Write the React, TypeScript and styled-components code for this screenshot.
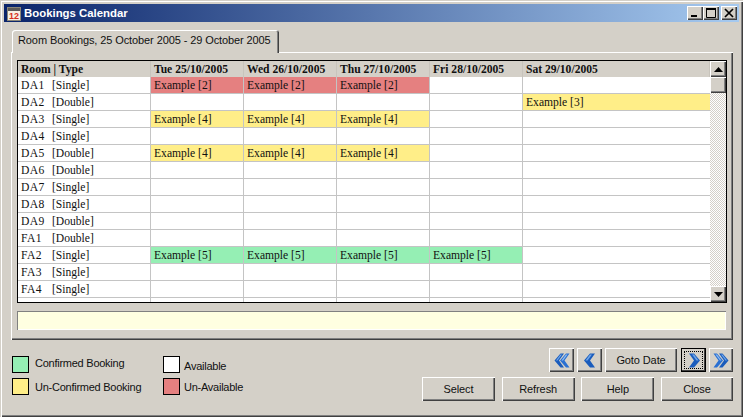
import styled, { createGlobalStyle } from 'styled-components';

const GlobalStyle = createGlobalStyle`
  html, body {
    margin: 0;
    padding: 0;
    background: #d4d0c8;
  }
  * {
    box-sizing: border-box;
  }
`;

type Booking = 'red' | 'yellow' | 'green';

interface RoomRow {
  room: string;
  type: string;
  cells: ([string, Booking] | null)[];
}

const colors: Record<Booking, string> = {
  red: '#e58080',
  yellow: '#ffee88',
  green: '#95efb4',
};

const red = (): [string, Booking] => ['Example [2]', 'red'];
const yellow = (): [string, Booking] => ['Example [4]', 'yellow'];
const green = (): [string, Booking] => ['Example [5]', 'green'];

const headers = [
  'Room | Type',
  'Tue 25/10/2005',
  'Wed 26/10/2005',
  'Thu 27/10/2005',
  'Fri 28/10/2005',
  'Sat 29/10/2005',
];

const rows: RoomRow[] = [
  { room: 'DA1', type: '[Single]', cells: [red(), red(), red(), null, null] },
  { room: 'DA2', type: '[Double]', cells: [null, null, null, null, ['Example [3]', 'yellow']] },
  { room: 'DA3', type: '[Single]', cells: [yellow(), yellow(), yellow(), null, null] },
  { room: 'DA4', type: '[Single]', cells: [null, null, null, null, null] },
  { room: 'DA5', type: '[Double]', cells: [yellow(), yellow(), yellow(), null, null] },
  { room: 'DA6', type: '[Double]', cells: [null, null, null, null, null] },
  { room: 'DA7', type: '[Single]', cells: [null, null, null, null, null] },
  { room: 'DA8', type: '[Single]', cells: [null, null, null, null, null] },
  { room: 'DA9', type: '[Double]', cells: [null, null, null, null, null] },
  { room: 'FA1', type: '[Double]', cells: [null, null, null, null, null] },
  { room: 'FA2', type: '[Single]', cells: [green(), green(), green(), green(), null] },
  { room: 'FA3', type: '[Single]', cells: [null, null, null, null, null] },
  { room: 'FA4', type: '[Single]', cells: [null, null, null, null, null] },
  { room: '', type: '', cells: [null, null, null, null, null] },
];

const LeftChevron = ({ double }: { double?: boolean }) => (
  <svg width="16" height="15" viewBox="0 0 16 15">
    {double ? (
      <>
        <path d="M6.5 0.5 L0.5 7.5 L6.5 14.5 H10 L5 7.5 L10 0.5 Z" fill="#1a5cbc" />
        <path d="M12 0.5 L6 7.5 L12 14.5 H15.5 L10.5 7.5 L15.5 0.5 Z" fill="#2a70d2" />
        <path d="M6.5 1.5 L2 7.5 H3.5 L8 1.5 Z" fill="#6fa6ea" />
        <path d="M12 1.5 L7.5 7.5 H9 L13.5 1.5 Z" fill="#8fbcf2" />
      </>
    ) : (
      <>
        <path d="M8 0.5 L2 7.5 L8 14.5 H13 L8 7.5 L13 0.5 Z" fill="#1a5cbc" />
        <path d="M8 1.5 L3.5 7.5 H5.5 L10 1.5 Z" fill="#6fa6ea" />
      </>
    )}
  </svg>
);

const RightChevron = ({ double }: { double?: boolean }) => (
  <Flipped>
    <LeftChevron double={double} />
  </Flipped>
);

const CalendarIcon = () => (
  <svg width="14" height="15" viewBox="0 0 14 15">
    <rect x="0.5" y="1.5" width="13" height="13" fill="#f6f1e4" stroke="#8a8678" />
    <rect x="1" y="2" width="12" height="3" fill="#5c5a58" />
    <text
      x="7"
      y="13"
      textAnchor="middle"
      fontFamily="Liberation Sans, sans-serif"
      fontWeight="bold"
      fontSize="9"
      fill="#d83020"
    >
      12
    </text>
  </svg>
);

export default function App() {
  return (
    <>
      <GlobalStyle />
      <Window>
        <TitleBar>
          <CalendarIcon />
          <Title>Bookings Calendar</Title>
          <WindowButtons>
            <CaptionButton aria-label="Minimize">
              <svg width="10" height="10" viewBox="0 0 10 10">
                <rect x="1" y="7" width="6" height="2" fill="#000" />
              </svg>
            </CaptionButton>
            <CaptionButton aria-label="Maximize">
              <svg width="11" height="10" viewBox="0 0 11 10">
                <path d="M0.5 1.5 H9.5 V9.5 H0.5 Z" fill="none" stroke="#000" />
                <rect x="0" y="0" width="10" height="2" fill="#000" />
              </svg>
            </CaptionButton>
            <CloseButton aria-label="Close">
              <svg width="10" height="10" viewBox="0 0 10 10">
                <path d="M1 1 L9 9 M9 1 L1 9" stroke="#000" strokeWidth="1.7" />
              </svg>
            </CloseButton>
          </WindowButtons>
        </TitleBar>
        <Content>
          <Tab>Room Bookings, 25 October 2005 - 29 October 2005</Tab>
          <Panel>
            <TableFrame>
              <Grid>
                <HeaderRow>
                  {headers.map((h) => (
                    <HeaderCell key={h}>{h}</HeaderCell>
                  ))}
                </HeaderRow>
                {rows.map((row, i) => (
                  <Row key={i}>
                    <Cell>
                      <RoomName>{row.room}</RoomName>
                      {row.type}
                    </Cell>
                    {row.cells.map((cell, j) => (
                      <Cell key={j} $fill={cell ? colors[cell[1]] : undefined}>
                        {cell ? cell[0] : ''}
                      </Cell>
                    ))}
                  </Row>
                ))}
              </Grid>
              <ScrollBar>
                <ScrollButton aria-label="Scroll up">
                  <svg width="9" height="5" viewBox="0 0 9 5">
                    <path d="M4.5 0 L9 5 H0 Z" fill="#000" />
                  </svg>
                </ScrollButton>
                <ScrollThumb />
                <ScrollTrack />
                <ScrollButton aria-label="Scroll down">
                  <svg width="9" height="5" viewBox="0 0 9 5">
                    <path d="M4.5 5 L9 0 H0 Z" fill="#000" />
                  </svg>
                </ScrollButton>
              </ScrollBar>
            </TableFrame>
            <StatusField />
          </Panel>
          <Footer>
            <Legend>
              <LegendColumn $width={151}>
                <LegendItem $gap={6}>
                  <Swatch $color={colors.green} />
                  <LegendLabel $drop={-2}>Confirmed Booking</LegendLabel>
                </LegendItem>
                <LegendItem $gap={6}>
                  <Swatch $color={colors.yellow} />
                  <LegendLabel>Un-Confirmed Booking</LegendLabel>
                </LegendItem>
              </LegendColumn>
              <LegendColumn>
                <LegendItem $gap={4}>
                  <Swatch $color="#ffffff" />
                  <LegendLabel $drop={1}>Available</LegendLabel>
                </LegendItem>
                <LegendItem $gap={4}>
                  <Swatch $color={colors.red} />
                  <LegendLabel>Un-Available</LegendLabel>
                </LegendItem>
              </LegendColumn>
            </Legend>
            <Actions>
              <NavRow>
                <Button $width={25} aria-label="Previous week">
                  <LeftChevron double />
                </Button>
                <Button $width={25} aria-label="Previous day">
                  <LeftChevron />
                </Button>
                <Button $width={72}>Goto Date</Button>
                <FocusedButton aria-label="Next day">
                  <FocusRing>
                    <RightChevron />
                  </FocusRing>
                </FocusedButton>
                <Button $width={24} aria-label="Next week">
                  <RightChevron double />
                </Button>
              </NavRow>
              <ActionRow>
                <Button $width={73}>Select</Button>
                <Button $width={73}>Refresh</Button>
                <Button $width={73}>Help</Button>
                <Button $width={72}>Close</Button>
              </ActionRow>
            </Actions>
          </Footer>
        </Content>
      </Window>
    </>
  );
}

const Window = styled.div`
  width: 743px;
  height: 417px;
  padding: 4px;
  display: flex;
  flex-direction: column;
  background: #d4d0c8;
  overflow: hidden;
  font-family: 'Liberation Sans', Arial, sans-serif;
  font-size: 11px;
  color: #111;
  box-shadow:
    inset 1px 1px 0 #d4d0c8,
    inset 2px 2px 0 #ffffff,
    inset -1px -1px 0 #404040,
    inset -2px -2px 0 #808080;
`;

const TitleBar = styled.div`
  height: 18px;
  display: flex;
  align-items: center;
  padding: 0 2px 0 3px;
  background: linear-gradient(90deg, #0a246a 0%, #a6caf0 100%);
  flex: none;
`;

const Title = styled.span`
  margin-left: 3px;
  color: #fff;
  font-weight: bold;
  font-size: 11.4px;
  white-space: nowrap;
`;

const WindowButtons = styled.div`
  margin-left: auto;
  display: flex;
`;

const CaptionButton = styled.button`
  width: 16px;
  height: 14px;
  padding: 0;
  border: 0;
  display: flex;
  align-items: center;
  justify-content: center;
  background: #d4d0c8;
  box-shadow:
    inset 1px 1px 0 #ffffff,
    inset -1px -1px 0 #404040,
    inset -2px -2px 0 #808080;
`;

const CloseButton = styled(CaptionButton)`
  margin-left: 2px;
`;

const Content = styled.div`
  flex: 1;
  display: flex;
  flex-direction: column;
  padding: 8px 2px 0 7px;
  min-height: 0;
`;

const Tab = styled.div`
  align-self: flex-start;
  width: 267px;
  height: 23px;
  margin: 0 0 -1px 1px;
  padding: 4px 0 0 6px;
  position: relative;
  z-index: 1;
  background: #d4d0c8;
  border-radius: 3px 3px 0 0;
  font-size: 11px;
  letter-spacing: -0.1px;
  white-space: nowrap;
  box-shadow:
    inset 1px 1px 0 #ffffff,
    inset -1px 0 0 #404040,
    inset -2px 0 0 #808080;
`;

const Panel = styled.div`
  width: 722px;
  height: 288px;
  padding: 8px 6px 9px 6px;
  display: flex;
  flex-direction: column;
  gap: 8px;
  flex: none;
  box-shadow:
    inset 1px 1px 0 #ffffff,
    inset -1px -1px 0 #404040,
    inset -2px -2px 0 #808080;
`;

const TableFrame = styled.div`
  height: 243px;
  display: flex;
  border: 1px solid #000;
  background: #fff;
  overflow: hidden;
  flex: none;
`;

const Grid = styled.div`
  flex: 1;
  min-width: 0;
  font-family: 'Liberation Serif', 'Times New Roman', serif;
  font-size: 11.6px;
`;

const columns = '133px 93px 93px 93px 93px 1fr';

const HeaderRow = styled.div`
  display: grid;
  grid-template-columns: ${columns};
  height: 16px;
  background: #d4d0c8;
`;

const HeaderCell = styled.div`
  padding: 2px 0 0 3px;
  font-weight: bold;
  white-space: nowrap;
  box-shadow: inset -1px 0 0 #c8c4bc;
`;

const Row = styled.div`
  display: grid;
  grid-template-columns: ${columns};
  height: 17px;
`;

const Cell = styled.div<{ $fill?: string }>`
  padding: 2px 0 0 3px;
  white-space: nowrap;
  background: ${(p) => p.$fill ?? '#ffffff'};
  border-right: 1px solid #c4c4c4;
  border-bottom: 1px solid #c4c4c4;
  &:last-child {
    border-right: 0;
  }
`;

const RoomName = styled.span`
  display: inline-block;
  width: 31px;
  letter-spacing: 0.4px;
`;

const ScrollBar = styled.div`
  width: 16px;
  display: flex;
  flex-direction: column;
  flex: none;
`;

const ScrollButton = styled.button`
  width: 16px;
  height: 16px;
  padding: 0;
  border: 0;
  flex: none;
  display: flex;
  align-items: center;
  justify-content: center;
  background: #d4d0c8;
  box-shadow:
    inset 1px 1px 0 #ffffff,
    inset -1px -1px 0 #404040,
    inset -2px -2px 0 #808080;
`;

const ScrollThumb = styled.div`
  height: 16px;
  flex: none;
  background: #d4d0c8;
  box-shadow:
    inset 1px 1px 0 #ffffff,
    inset -1px -1px 0 #404040,
    inset -2px -2px 0 #808080;
`;

const ScrollTrack = styled.div`
  flex: 1;
  background: repeating-conic-gradient(#d4d0c8 0 25%, #ffffff 0 50%) 0 0 / 2px 2px;
`;

const StatusField = styled.div`
  height: 19px;
  flex: none;
  margin-right: 1px;
  background: #ffffe1;
  box-shadow:
    inset 1px 1px 0 #808080,
    inset -1px -1px 0 #ffffff;
`;

const Footer = styled.div`
  display: flex;
  justify-content: space-between;
  padding: 8px 0 0 1px;
  width: 722px;
`;

const Legend = styled.div`
  display: flex;
  padding-top: 8px;
  font-size: 11px;
  letter-spacing: -0.25px;
`;

const LegendColumn = styled.div<{ $width?: number }>`
  display: flex;
  flex-direction: column;
  gap: 5px;
  width: ${(p) => (p.$width ? `${p.$width}px` : 'auto')};
`;

const LegendItem = styled.div<{ $gap: number }>`
  display: flex;
  align-items: center;
  gap: ${(p) => p.$gap}px;
`;

const Swatch = styled.div<{ $color: string }>`
  width: 17px;
  height: 17px;
  border: 1px solid #000;
  background: ${(p) => p.$color};
`;

const LegendLabel = styled.span<{ $drop?: number }>`
  transform: translateY(${(p) => p.$drop ?? 0}px);
  white-space: nowrap;
`;

const Actions = styled.div`
  width: 311px;
  display: flex;
  flex-direction: column;
  gap: 5px;
`;

const NavRow = styled.div`
  display: flex;
  justify-content: flex-end;
  gap: 3px;
`;

const ActionRow = styled.div`
  display: flex;
  justify-content: space-between;
`;

const Button = styled.button<{ $width: number }>`
  width: ${(p) => p.$width}px;
  height: 24px;
  padding: 0;
  border: 0;
  display: flex;
  align-items: center;
  justify-content: center;
  background: #d4d0c8;
  color: #111;
  font-family: 'Liberation Sans', Arial, sans-serif;
  font-size: 11px;
  letter-spacing: -0.1px;
  box-shadow:
    inset 1px 1px 0 #ffffff,
    inset -1px -1px 0 #404040,
    inset -2px -2px 0 #808080;
`;

const FocusedButton = styled.button`
  width: 25px;
  height: 24px;
  margin-left: 1px;
  padding: 3px;
  border: 1px solid #000;
  background: #d4d0c8;
  box-shadow: inset -1px -1px 0 #404040;
`;

const FocusRing = styled.div`
  width: 100%;
  height: 100%;
  display: flex;
  align-items: center;
  justify-content: center;
  outline: 1px dotted #000;
`;

const Flipped = styled.span`
  display: flex;
  transform: scaleX(-1);
`;
